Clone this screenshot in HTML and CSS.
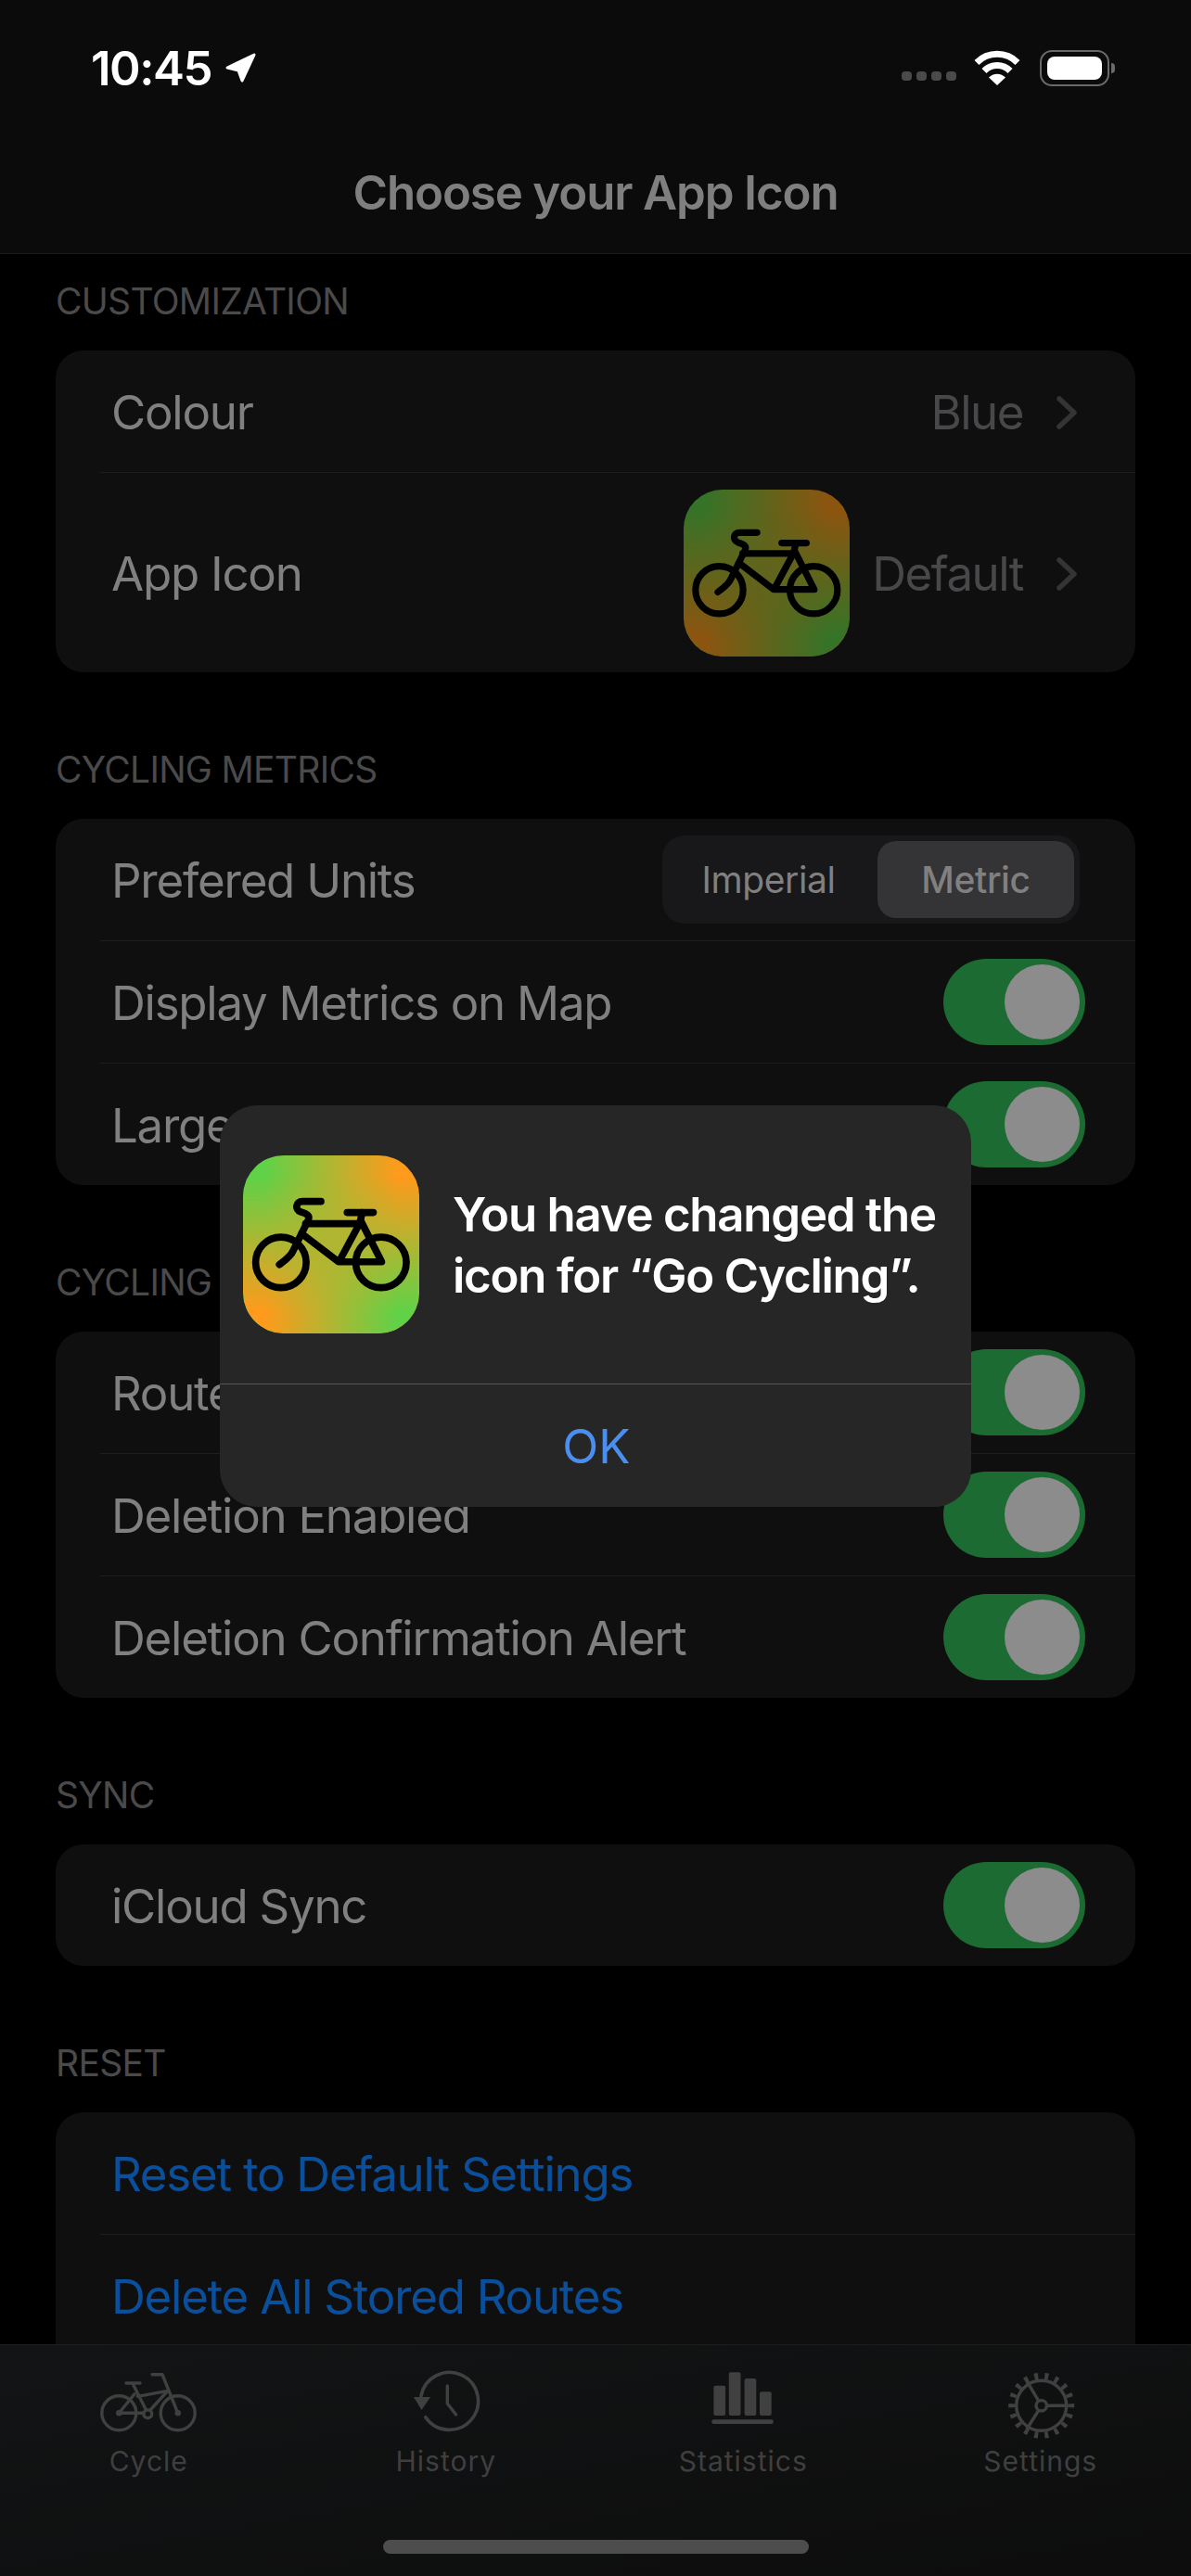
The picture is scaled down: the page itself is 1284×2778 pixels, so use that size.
FILE: index.html
```html
<!DOCTYPE html>
<html lang="en">
<head>
  <meta charset="UTF-8">
  <meta name="viewport" content="width=device-width, initial-scale=1.0">
  <title>Choose your App Icon</title>
  <link rel="stylesheet" href="styles.css">
</head>
<body>
  <svg class="defs" width="0" height="0">
    <symbol id="bike" viewBox="65 78 572 575">
      <g fill="none" stroke="#000" stroke-width="23" stroke-linecap="round" stroke-linejoin="round">
        <circle cx="188" cy="424" r="82"/>
        <circle cx="513" cy="424" r="82"/>
        <path d="M318 226H258C236 226 232 252 252 260C272 266 284 272 276 288L228 385C220 405 200 418 183 431"/>
        <path d="M268 298H448"/>
        <path d="M255 330L375 422H515L448 290"/>
        <path d="M380 415L442 300"/>
        <path d="M403 262H488"/>
        <path d="M452 262L444 296"/>
      </g>
    </symbol>
  </svg>

  <header class="top">
    <div class="status">
      <div class="status-left">
        <span class="time">10:45</span>
        <svg class="arrow" width="34" height="34" viewBox="0 0 34 34"><path d="M2 17L31 3L18 31L14 20Z" fill="#fff" stroke="#fff" stroke-width="3" stroke-linejoin="round"/></svg>
      </div>
      <div class="status-right">
        <div class="dots"><i></i><i></i><i></i><i></i></div>
        <svg class="wifi" width="50" height="38" viewBox="0 0 50 38">
          <path d="M3 13.5A31 31 0 0 1 47 13.5" fill="none" stroke="#fff" stroke-width="7"/>
          <path d="M11 22.5A19.5 19.5 0 0 1 39 22.5" fill="none" stroke="#fff" stroke-width="7"/>
          <path d="M25 38L16 29.5A12.5 12.5 0 0 1 34 29.5Z" fill="#fff"/>
        </svg>
        <div class="battery"><div class="battery-fill"></div></div>
        <div class="battery-cap"></div>
      </div>
    </div>
    <h1>Choose your App Icon</h1>
  </header>

  <main>
    <div class="scroller">
      <section>
        <h2>CUSTOMIZATION</h2>
        <div class="card">
          <div class="row">
            <span>Colour</span>
            <div class="value">
              <span>Blue</span>
              <svg class="chev" width="22" height="36" viewBox="0 0 22 36"><path d="M3 3L19 18L3 33" fill="none" stroke="#343436" stroke-width="5.5" stroke-linecap="round" stroke-linejoin="round"/></svg>
            </div>
          </div>
          <div class="row row-icon">
            <span>App Icon</span>
            <div class="value">
              <div class="app-icon app-icon-dim"><svg width="179" height="180"><use href="#bike"/></svg></div>
              <span class="value-text">Default</span>
              <svg class="chev" width="22" height="36" viewBox="0 0 22 36"><path d="M3 3L19 18L3 33" fill="none" stroke="#343436" stroke-width="5.5" stroke-linecap="round" stroke-linejoin="round"/></svg>
            </div>
          </div>
        </div>
      </section>

      <section>
        <h2>CYCLING METRICS</h2>
        <div class="card">
          <div class="row">
            <span>Prefered Units</span>
            <div class="segment">
              <div class="seg-item seg-off">Imperial</div>
              <div class="seg-item seg-on">Metric</div>
            </div>
          </div>
          <div class="row">
            <span>Display Metrics on Map</span>
            <div class="toggle"><div class="knob"></div></div>
          </div>
          <div class="row">
            <span>Large Metrics</span>
            <div class="toggle"><div class="knob"></div></div>
          </div>
        </div>
      </section>

      <section>
        <h2>CYCLING ROUTES</h2>
        <div class="card">
          <div class="row">
            <span>Route Tracking</span>
            <div class="toggle"><div class="knob"></div></div>
          </div>
          <div class="row">
            <span>Deletion Enabled</span>
            <div class="toggle"><div class="knob"></div></div>
          </div>
          <div class="row">
            <span>Deletion Confirmation Alert</span>
            <div class="toggle"><div class="knob"></div></div>
          </div>
        </div>
      </section>

      <section>
        <h2>SYNC</h2>
        <div class="card">
          <div class="row">
            <span>iCloud Sync</span>
            <div class="toggle"><div class="knob"></div></div>
          </div>
        </div>
      </section>

      <section>
        <h2>RESET</h2>
        <div class="card">
          <div class="row link"><span>Reset to Default Settings</span></div>
          <div class="row link"><span>Delete All Stored Routes</span></div>
          <div class="row link"></div>
        </div>
      </section>
    </div>
  </main>

  <nav class="tabs">
    <div class="tab-list">
      <div class="tab">
        <svg width="120" height="80" viewBox="0 0 120 80">
          <g fill="none" stroke="#404040" stroke-width="3.4" stroke-linecap="round" stroke-linejoin="round">
            <circle cx="28.3" cy="48.3" r="18.5"/>
            <circle cx="91.7" cy="48.3" r="18.5"/>
            <circle cx="59.3" cy="49.3" r="4.4"/>
            <path d="M64 6.7H75L91.7 48.3"/>
            <path d="M36 16H51"/>
            <path d="M43.3 17L57.5 45"/>
            <path d="M48.3 30.3L80.7 24.3L62 45"/>
            <path d="M45 27.7L28.3 48.3H55"/>
          </g>
          <circle cx="28.3" cy="48.3" r="3.2" fill="#404040"/>
          <circle cx="91.7" cy="48.3" r="3.2" fill="#404040"/>
        </svg>
        <span>Cycle</span>
      </div>
      <div class="tab">
        <svg width="120" height="80" viewBox="0 0 120 80">
          <path d="M33 30A31 31 0 1 1 37.8 52.7" fill="none" stroke="#404040" stroke-width="3.6" stroke-linecap="round"/>
          <path d="M25 31H43L33.5 45Z" fill="#404040"/>
          <path d="M61.3 19V38L70.6 50" fill="none" stroke="#404040" stroke-width="3.4" stroke-linecap="round" stroke-linejoin="round"/>
        </svg>
        <span>History</span>
      </div>
      <div class="tab">
        <svg width="120" height="80" viewBox="0 0 120 80">
          <g fill="#404040">
            <rect x="28.4" y="18.7" width="12.7" height="32.3" rx="2"/>
            <rect x="44.8" y="4.3" width="12.7" height="46.7" rx="2"/>
            <rect x="61.6" y="11" width="12.7" height="40" rx="2"/>
            <rect x="78" y="25.3" width="12.7" height="25.7" rx="2"/>
            <rect x="26.3" y="55.3" width="66.5" height="4.7" rx="2.3"/>
          </g>
        </svg>
        <span>Statistics</span>
      </div>
      <div class="tab">
        <svg width="120" height="80" viewBox="0 0 120 80">
          <g fill="none" stroke="#404040" stroke-linecap="round">
            <circle cx="60.7" cy="40.3" r="27" stroke-width="3.4"/>
            <circle cx="60.7" cy="40.3" r="32" stroke-width="7" stroke-linecap="butt" pathLength="180" stroke-dasharray="3.6 6.4" stroke-dashoffset="1.8"/>
            <circle cx="60.7" cy="40.3" r="5.7" stroke-width="3.4"/>
            <path d="M66.7 40.3H87M57.3 34.3L45.3 14.3M57.3 46L45.3 65" stroke-width="3.4"/>
          </g>
        </svg>
        <span>Settings</span>
      </div>
    </div>
    <div class="home-bar"></div>
  </nav>

  <div class="alert">
    <div class="alert-body">
      <div class="app-icon alert-icon"><svg width="190" height="192"><use href="#bike"/></svg></div>
      <p>You have changed the icon for “Go Cycling”.</p>
    </div>
    <div class="alert-ok">OK</div>
  </div>
</body>
</html>
```

FILE: styles.css
```css
* {
  box-sizing: border-box;
}

body {
  margin: 0;
  width: 1284px;
  height: 2778px;
  overflow: hidden;
  position: relative;
  display: flex;
  flex-direction: column;
  background-color: #000;
  font-family: Inter, "Liberation Sans", sans-serif;
  color: #808080;
}

.defs {
  position: absolute;
}

/* top bar */
.top {
  height: 274px;
  flex: none;
  background-color: #0b0b0b;
  border-bottom: 1px solid #1c1c1c;
}

.status {
  height: 146px;
  padding: 0 82px 0 98px;
  display: flex;
  justify-content: space-between;
  align-items: center;
}

.status-left {
  display: flex;
  align-items: center;
  gap: 15px;
}

.time {
  font-size: 51px;
  font-weight: 600;
  letter-spacing: -1.5px;
  color: #fff;
}

.status-right {
  display: flex;
  align-items: center;
}

.dots {
  display: flex;
  gap: 5px;
  margin: 17px 19px 0 0;
}

.dots i {
  width: 11px;
  height: 10px;
  border-radius: 4px;
  background-color: #4a4a4a;
}

.wifi {
  margin-right: 21px;
}

.battery {
  width: 75px;
  height: 39px;
  padding: 5px 6px;
  border: 2.5px solid #6a6a6a;
  border-radius: 13px;
}

.battery-fill {
  height: 100%;
  background-color: #fff;
  border-radius: 8px;
}

.battery-cap {
  width: 4px;
  height: 11px;
  margin-left: 2px;
  background-color: #6a6a6a;
  border-radius: 0 4px 4px 0;
}

h1 {
  margin: 0;
  height: 127px;
  padding-bottom: 5px;
  display: flex;
  align-items: center;
  justify-content: center;
  font-size: 51px;
  font-weight: 600;
  letter-spacing: -1.15px;
  color: #7f7f7f;
}

/* list */
main {
  flex: 1;
  overflow: hidden;
}

.scroller {
  margin-top: -54px;
  padding: 0 60px;
}

h2 {
  margin: 0;
  height: 158px;
  padding: 0 0 30px 0;
  display: flex;
  align-items: flex-end;
  font-size: 39px;
  line-height: 47px;
  font-weight: 400;
  letter-spacing: -0.7px;
  color: #4a4a4a;
}

.card {
  background-color: #0f0f0f;
  border-radius: 30px;
  overflow: hidden;
}

.row {
  height: 131px;
  margin-left: 48px;
  padding-right: 30px;
  display: flex;
  align-items: center;
  justify-content: space-between;
  font-size: 51px;
  letter-spacing: -1.25px;
}

.row > span {
  margin-left: 12px;
  padding-top: 2px;
}

.row + .row {
  height: 132px;
  border-top: 1px solid #1e1e1e;
}

.row-icon.row-icon {
  height: 216px;
}

.value {
  display: flex;
  align-items: center;
  gap: 36px;
  padding-top: 2px;
  letter-spacing: -1.5px;
  color: #48484a;
}

.value-text {
  margin-left: -12px;
}

.chev {
  margin-right: 33px;
}

.link {
  color: #0a4f9c;
}

.app-icon {
  position: relative;
  background: linear-gradient(90deg, #60d248 12%, #ff9a1c 88%);
  display: flex;
}

.app-icon::before {
  content: "";
  position: absolute;
  inset: 0;
  background: linear-gradient(90deg, #ff9a1c 12%, #60d248 88%);
  -webkit-mask-image: linear-gradient(180deg, transparent 12%, #000 88%);
  mask-image: linear-gradient(180deg, transparent 12%, #000 88%);
  border-radius: inherit;
}

.app-icon svg {
  position: relative;
}

.app-icon-dim {
  width: 179px;
  height: 180px;
  border-radius: 42px;
  filter: brightness(0.55);
  margin-top: -2px;
}

.segment {
  width: 450px;
  height: 95px;
  padding: 6px;
  margin-right: 30px;
  display: flex;
  background-color: #18181a;
  border-radius: 24px;
  font-size: 39px;
  letter-spacing: -0.4px;
}

.seg-item {
  flex: 1;
  display: flex;
  align-items: center;
  justify-content: center;
  border-radius: 20px;
}

.seg-off {
  padding-right: 9px;
}

.seg-on {
  flex: none;
  width: 212px;
  background-color: #343436;
  font-weight: 500;
}

.toggle {
  width: 153px;
  height: 93px;
  padding: 6px;
  margin-right: 24px;
  display: flex;
  justify-content: flex-end;
  background-color: #1b6b32;
  border-radius: 47px;
}

.knob {
  width: 81px;
  height: 81px;
  border-radius: 50%;
  background-color: #8c8c8c;
}

/* tab bar */
.tabs {
  height: 250px;
  flex: none;
  border-top: 1px solid #1d1d1d;
  background: linear-gradient(170deg, #121415, #0d0d0d);
  padding-top: 25px;
  display: flex;
  flex-direction: column;
  align-items: center;
}

.tab-list {
  width: 1284px;
  padding-right: 2px;
  display: flex;
}

.tab {
  flex: 1;
  display: flex;
  flex-direction: column;
  align-items: center;
  font-size: 30px;
  line-height: 36px;
  letter-spacing: 1px;
  color: #3f3f3f;
}

.tab span {
  margin-top: 2px;
}

.home-bar {
  width: 459px;
  height: 15px;
  margin-top: 67px;
  background-color: #4d4d4d;
  border-radius: 8px;
}

/* alert */
.alert {
  position: absolute;
  left: 237px;
  top: 1192px;
  width: 810px;
  height: 433px;
  background-color: #262626;
  border-radius: 40px;
}

.alert-body {
  height: 301px;
  padding: 54px 30px 0 25px;
  display: flex;
  gap: 36px;
  border-bottom: 1px solid #555;
}

.alert-icon {
  width: 190px;
  height: 192px;
  flex: none;
  border-radius: 44px;
}

.alert-body p {
  margin: 31px 0 0;
  font-size: 51px;
  line-height: 66px;
  font-weight: 600;
  letter-spacing: -1.25px;
  color: #fff;
}

.alert-ok {
  height: 132px;
  padding-left: 2px;
  display: flex;
  align-items: center;
  justify-content: center;
  font-size: 51px;
  color: #4a8ff0;
}
```
